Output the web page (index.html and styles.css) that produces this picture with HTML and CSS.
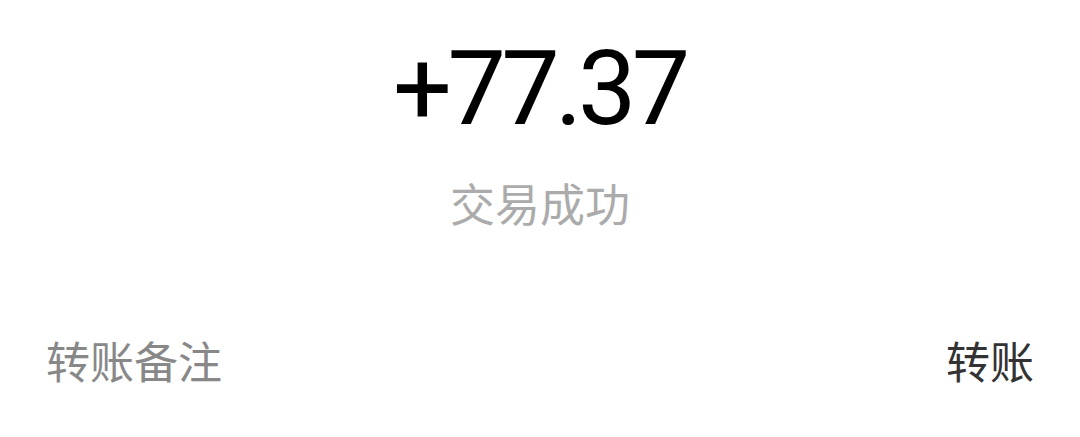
FILE: index.html
```html
<!DOCTYPE html>
<html lang="zh">
<head>
<meta charset="utf-8">
<link rel="stylesheet" href="styles.css">
</head>
<body>
<div class="page">
  <div class="header">
    <div class="amount">+77.37</div>
    <div class="status">交易成功</div>
  </div>
  <div class="row">
    <span class="label">转账备注</span>
    <span class="value">转账</span>
  </div>
</div>
</body>
</html>
```
FILE: styles.css
```css
html, body {
  margin: 0;
  padding: 0;
  background: #ffffff;
}
.page {
  width: 1080px;
  height: 437px;
  font-family: Roboto, "Noto Sans CJK SC", sans-serif;
}
.header {
  display: flex;
  flex-direction: column;
  align-items: center;
  padding-top: 29px;
}
.amount {
  font-size: 104px;
  line-height: 120px;
  color: #000;
  letter-spacing: -4.6px;
  padding-right: 1.4px;
}
.status {
  margin-top: 28px;
  font-size: 45px;
  line-height: 60px;
  color: #ababab;
}
.row {
  display: flex;
  justify-content: space-between;
  align-items: center;
  padding: 0 46px;
  margin-top: 97px;
  font-size: 44px;
  line-height: 60px;
}
.label {
  color: #888888;
}
.value {
  color: #333333;
}
```
